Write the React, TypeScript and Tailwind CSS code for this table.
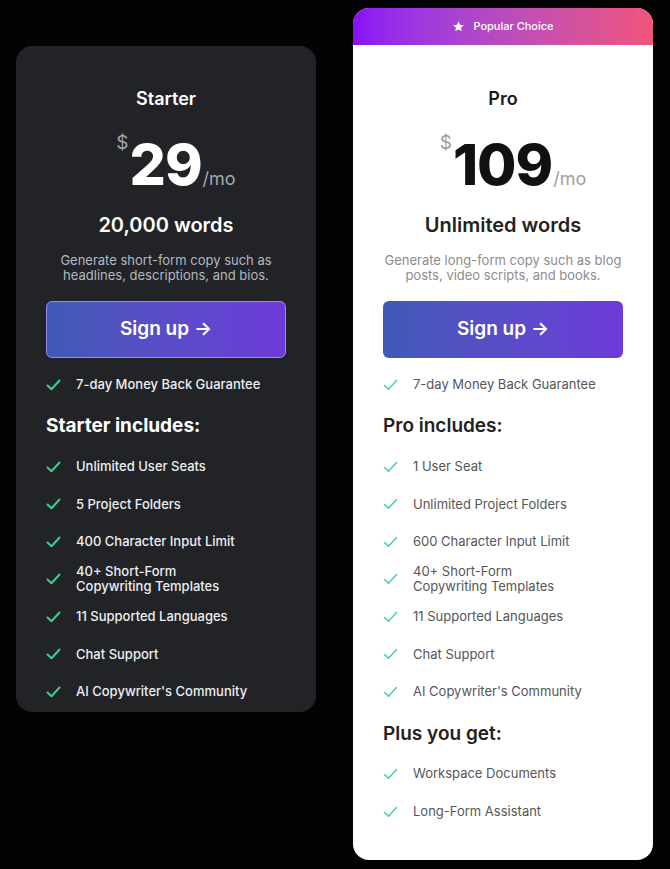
import React from "react";

type Plan = {
  name: string;
  price: string;
  words: string;
  desc: [string, string];
  includes: string[];
  extras?: string[];
  dark: boolean;
};

const starter: Plan = {
  name: "Starter",
  price: "29",
  words: "20,000 words",
  desc: ["Generate short-form copy such as", "headlines, descriptions, and bios."],
  includes: [
    "Unlimited User Seats",
    "5 Project Folders",
    "400 Character Input Limit",
    "40+ Short-Form\nCopywriting Templates",
    "11 Supported Languages",
    "Chat Support",
    "AI Copywriter's Community",
  ],
  dark: true,
};

const pro: Plan = {
  name: "Pro",
  price: "109",
  words: "Unlimited words",
  desc: ["Generate long-form copy such as blog", "posts, video scripts, and books."],
  includes: [
    "1 User Seat",
    "Unlimited Project Folders",
    "600 Character Input Limit",
    "40+ Short-Form\nCopywriting Templates",
    "11 Supported Languages",
    "Chat Support",
    "AI Copywriter's Community",
  ],
  extras: ["Workspace Documents", "Long-Form Assistant"],
  dark: false,
};

function Check({ dark }: { dark: boolean }) {
  return (
    <svg width="15" height="12" viewBox="0 0 15 12" fill="none" className="shrink-0">
      <path
        d="M1.5 6.5 L5.5 10.2 L13.5 1.5"
        stroke={dark ? "#3ecf8e" : "#4fd39c"}
        strokeWidth={dark ? 2 : 1.6}
        strokeLinecap="round"
        strokeLinejoin="round"
      />
    </svg>
  );
}

function Feature({ text, dark, tall }: { text: string; dark: boolean; tall?: boolean }) {
  return (
    <li className={`flex items-center gap-[15px] ${tall ? "h-[38px]" : "h-[37.5px]"}`}>
      <Check dark={dark} />
      <span
        className={`whitespace-pre-line text-[13px] leading-[15px] ${
          dark ? "font-medium text-[#eceef1]" : "text-[#555659]"
        }`}
      >
        {text}
      </span>
    </li>
  );
}

function PlanBody({ plan }: { plan: Plan }) {
  const dark = plan.dark;
  return (
    <div className={`px-[30px] ${dark ? "pt-[41px] pb-[1px]" : "pt-[42px] pb-[29px]"}`}>
      <div className="text-center">
        <h2 className={`text-[18px] font-semibold leading-6 ${dark ? "text-white" : "text-[#1a1a1a]"}`}>
          {plan.name}
        </h2>
        <div className="mt-[25px] flex items-baseline justify-center pl-[20px] leading-none">
          <span className={`-mt-[3px] mr-[1px] self-start text-[19px] ${dark ? "text-[#a3a7b0]" : "text-[#9a9a9a]"}`}>
            $
          </span>
          <span
            className={`text-[57px] font-extrabold tracking-[-1px] leading-[58px] ${
              dark ? "text-white" : "text-[#111111]"
            }`}
          >
            {plan.price}
          </span>
          <span className={`ml-[1px] text-[18px] ${dark ? "text-[#a3a7b0]" : "text-[#a0a0a0]"}`}>/mo</span>
        </div>
        <p
          className={`mt-[17px] text-[20px] font-semibold leading-7 ${
            dark ? "text-white" : "text-[#222222]"
          }`}
        >
          {plan.words}
        </p>
        <p
          className={`mt-[13.5px] text-[13px] leading-[15px] ${
            dark ? "text-[#b4b8c0]" : "text-[#8c8c8f]"
          }`}
        >
          {plan.desc[0]}
          <br />
          {plan.desc[1]}
        </p>
      </div>

      <button
        className={`mt-[18.5px] flex h-[57px] w-full items-center justify-center rounded-[6px] bg-gradient-to-r from-[#4159b6] to-[#6d3ad9] text-[19px] font-semibold text-white ${
          dark ? "border border-[#8f8ff2]" : ""
        }`}
      >
        Sign up →
      </button>

      <div className="mt-[19px] flex h-4 items-center gap-[15px]">
        <Check dark={dark} />
        <span className={`text-[13px] ${dark ? "font-medium text-[#eceef1]" : "text-[#555659]"}`}>
          7-day Money Back Guarantee
        </span>
      </div>

      <h3
        className={`mt-[21px] text-[19px] leading-6 ${
          dark ? "font-bold text-white" : "font-semibold text-[#222222]"
        }`}
      >
        {plan.name} includes:
      </h3>
      <ul className="mt-[10px]">
        {plan.includes.map((f) => (
          <Feature key={f} text={f} dark={dark} />
        ))}
      </ul>

      {plan.extras && (
        <>
          <h3 className="mt-[11px] text-[19px] font-semibold leading-6 text-[#222222]">Plus you get:</h3>
          <ul className="mt-[9px]">
            {plan.extras.map((f) => (
              <Feature key={f} text={f} dark={dark} tall />
            ))}
          </ul>
        </>
      )}
    </div>
  );
}

export default function App() {
  return (
    <div
      className="flex h-[869px] w-[670px] items-start gap-[37px] bg-[#030303] px-[16px] pt-[8px]"
      style={{ fontFamily: "Inter, 'Noto Sans', sans-serif" }}
    >
      {/* Starter */}
      <div className="mt-[38px] w-[300px] rounded-[16px] bg-[#212327]">
        <PlanBody plan={starter} />
      </div>

      {/* Pro */}
      <div className="w-[300px] overflow-hidden rounded-[16px] bg-white">
        <div className="flex h-[37px] items-center justify-center gap-[8px] bg-gradient-to-r from-[#8a0cf6] to-[#f1537a]">
          <svg width="13" height="13" viewBox="0 0 24 24" fill="white">
            <path d="M12 2.5l2.9 6.2 6.8.8-5 4.7 1.3 6.7L12 17.6l-6 3.3 1.3-6.7-5-4.7 6.8-.8z" />
          </svg>
          <span className="text-[11px] font-medium text-white">Popular Choice</span>
        </div>
        <PlanBody plan={pro} />
      </div>
    </div>
  );
}
